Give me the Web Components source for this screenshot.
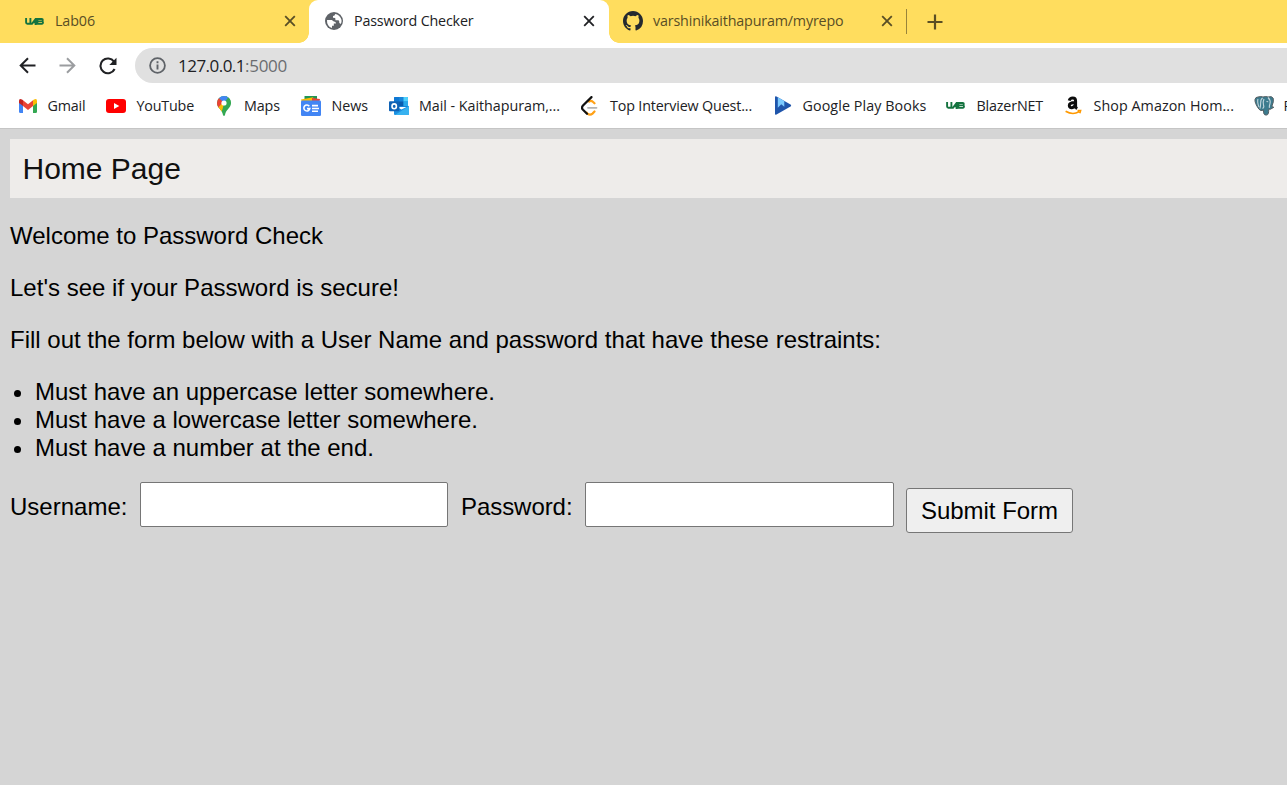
<!DOCTYPE html>
<html lang="en">
<head>
<meta charset="utf-8">
<title>Password Checker</title>
<style>
html,body{margin:0;height:100%;overflow:hidden;background:#d5d5d5}
</style>
</head>
<body>
<browser-window></browser-window>
<script>
const define = (name, html, setup) => customElements.define(name, class extends HTMLElement {
  connectedCallback() {
    if (this.shadowRoot) return;
    const t = document.createElement('template');
    t.innerHTML = html;
    this.attachShadow({mode: 'open'}).appendChild(t.content.cloneNode(true));
    if (setup) setup(this);
  }
});

/* A single line of text whose tracking is adjusted to an advance width. */
define('fit-text', `<style>:host{display:block;white-space:nowrap;flex:none}span{display:inline-block}</style><span><slot></slot></span>`, el => {
  const s = el.shadowRoot.querySelector('span');
  const n = [...el.textContent].length;
  const want = +el.getAttribute('w');
  if (!want) return;
  el.style.width = want + 'px';
  s.style.letterSpacing = (want - s.getBoundingClientRect().width) / n + 'px';
});

const icons = {
  uab: `<svg width="19" height="7" viewBox="0 0 19 7"><path d="M1.1 0v4.6q0 1.2 1.3 1.2H5.4V0M5 5.8h2L10.6 1v6M8 4.4h3M12.4 1h4.4q1 0 1 1.1T16.8 3.4h-4h4.2q1 0 1 1.2T17 5.9h-4.6z" fill="none" stroke="#14733f" stroke-width="1.9"/></svg>`,
  gmail: `<svg width="18" height="14" viewBox="0 0 18 14"><path d="M0 2v10.5Q0 14 1.3 14H4V5z" fill="#4285f4"/><path d="M18 2v10.5q0 1.5-1.3 1.5H14V5z" fill="#34a853"/><path d="M14 1.3V7l4-3V2q0-3-3-1.4z" fill="#fbbc04"/><path d="M4 1.3V7L0 4V2q0-3 3-1.4z" fill="#c5221f"/><path d="M4 1.3l5 4 5-4V7l-5 4-5-4z" fill="#ea4335"/></svg>`,
  youtube: `<svg width="20" height="14" viewBox="0 0 20 14"><rect width="20" height="14" rx="3" fill="#f00"/><path d="M8 4l5.3 3L8 10z" fill="#fff"/></svg>`,
  maps: `<svg width="14" height="20" viewBox="0 0 14 20"><defs><clipPath id="p"><path d="M7 0a7 7 0 0 1 7 7c0 5-5 6-6 12q-1 2-2 0C5 13 0 12 0 7a7 7 0 0 1 7-7"/></clipPath></defs><g clip-path="url(#p)"><path d="M0 0h14v20H0z" fill="#34a853"/><path d="M0 0l7 6-6 7H0z" fill="#ea4335"/><path d="M0 13l7-8 3 4-6 7z" fill="#fbbc04"/><path d="M9 0h5v7L7 16l-2-1z" fill="#34a853"/><path d="M2 2L4-1h9L7 7z" fill="#4285f4"/></g><circle cx="7" cy="7" r="2.6" fill="#fff"/></svg>`,
  news: `<svg width="20" height="20" viewBox="0 0 20 20"><path d="M3.5 0h12.5v6H3.5z" fill="#219653"/><path d="M0 3.6l12-2.3 2 5H1z" fill="#fbbc04"/><path d="M11 2l8 1-1 4h-7z" fill="#ea4335"/><rect y="4.6" width="20" height="15.4" rx="1.3" fill="#4285f4"/><path d="M8.3 10.2A3 3 0 1 0 8.8 12.6H6M11 9.6h6M11 12.5h7M11 15.3h6" fill="none" stroke="#fff" stroke-width="1.6"/></svg>`,
  outlook: `<svg width="20" height="18" viewBox="0 0 20 18"><path d="M5 1q0-1 1-1h12q1 0 1 1v9H5z" fill="#1784d9"/><path d="M5 1q0-1 1-1h4v4H5z" fill="#0f78d4"/><path d="M10 4.5h4.5V9H10z" fill="#0a5cae"/><path d="M14.5 0H18q1 0 1 1v3.5h-4.5z" fill="#4fd0fb"/><path d="M14.5 4.5H19V9h-4.5z" fill="#28a8ea"/><path d="M5 8.5l7.5 4L20 8.7V17q0 1-1 1H6q-1 0-1-1z" fill="#1a8fe0"/><path d="M6 18L20 9v8q0 1-1 1z" fill="#37b2f0"/><rect y="4.3" width="10.4" height="10" rx="1" fill="#0f62b5"/><ellipse cx="5.2" cy="9.3" rx="2.2" ry="2.4" fill="none" stroke="#fff" stroke-width="1.6"/></svg>`,
  leet: `<svg width="17" height="20" viewBox="0 0 17 20" fill="none" stroke-linecap="round" stroke-width="2.2"><path d="M7 11.8h8.5" stroke="#b3b3b3" stroke-width="1.8"/><path d="M13.5 7.3l-1.7-1.6Q10 4 8 5.6M13.5 15.5l-2 2.1q-2.5 2.2-5 0l-1-1" stroke="#ffa116"/><path d="M10.5 1.1L2 9.5q-2 2.2 0 4.3l4 4" stroke="#111"/></svg>`,
  books: `<svg width="18" height="19" viewBox="0 0 18 19"><path d="M1 1.2Q1-.3 2.5.5L16.5 8.5q1.3 1 0 2L2.5 18.5Q1 19.3 1 17.8z" fill="#1f55ab"/><path d="M3.8 1.2l6.5 3.8v5.8L7.2 8.2l-3.4 3.6z" fill="#7bcaff"/></svg>`,
  amazon: `<svg width="17" height="19" viewBox="0 0 17 19"><path d="M4.2 4.6Q5 2.1 7.7 2.1q2.9 0 2.9 2.8v5.4q0 1.5 1.5 2.5M10 6.4c-3.8 0-5.7.8-5.7 3.1 0 3.3 4.9 2.8 6-.7" fill="none" stroke="#0c0c0c" stroke-width="3"/><path d="M.6 15.2q7 4.2 13.4.6M12.6 14.6l3-.1-.8 2.8" fill="none" stroke="#ff9900" stroke-width="1.6"/></svg>`,
  postgres: `<svg width="21" height="20" viewBox="0 0 21 20"><path d="M4 1q3-1 5 0 3-1 5 0 4-1.2 5.2 1.2 1 3-1.4 8.3l2 .8-3.5 2-1.6-.2c0 3 0 6-2.5 6s-2.7-2-2.7-5q-3 1.4-4.6-1Q.5 7 1 3.4 1.5 1 4 1" fill="#3c7b8e" stroke="#555f63" stroke-width="1"/><path d="M8.7 2q-2 1-2 4.5t-.8 6.2M8.5 12.5q2-1 1-3.5T10 3M14 1.5q3 3 2 6t-.6 4.3M12.5 5.5l1.7.3M4 3q-1 3 1 8" fill="none" stroke="#c3d6dd" stroke-width="1.1"/></svg>`,
  globe: `<svg width="18" height="18" viewBox="0 0 18 18"><circle cx="9" cy="9" r="9" fill="#5f6368"/><path d="M2 8l4.8.1 2 1.4q2.2-.1 2.2 2H8.8v2.3H7V16Q1.7 14.4 2 8M10.2 2q-.2 1.8-2.2 2v1.8l2.2.2.3 2.2 3 .1q1 .8.8 2.7l1.5 1.1Q18 7.7 14 3.8 12.3 2 10.2 2" fill="#fff"/></svg>`,
  github: `<svg width="20" height="20" viewBox="0 0 16 16"><path fill="#24292f" d="M8 0C3.58 0 0 3.58 0 8c0 3.54 2.29 6.53 5.47 7.59.4.07.55-.17.55-.38 0-.19-.01-.82-.01-1.49-2.01.37-2.53-.49-2.69-.94-.09-.23-.48-.94-.82-1.13-.28-.15-.68-.52-.01-.53.63-.01 1.08.58 1.23.82.72 1.21 1.87.87 2.33.66.07-.52.28-.87.51-1.07-1.78-.2-3.64-.89-3.64-3.95 0-.87.31-1.59.82-2.15-.08-.2-.36-1.02.08-2.12 0 0 .67-.21 2.2.82a7.6 7.6 0 0 1 4 0c1.53-1.04 2.2-.82 2.2-.82.44 1.1.16 1.92.08 2.12.51.56.82 1.27.82 2.15 0 3.07-1.87 3.75-3.65 3.95.29.25.54.73.54 1.48 0 1.07-.01 1.93-.01 2.2 0 .21.15.46.55.38A8 8 0 0 0 16 8c0-4.42-3.58-8-8-8"/></svg>`,
  close: `<svg width="12" height="12" viewBox="0 0 12 12"><path d="M1.2 1.2l9.6 9.6M10.8 1.2l-9.6 9.6" fill="none" stroke="currentColor" stroke-width="1.8"/></svg>`,
  plus: `<svg width="16" height="16" viewBox="0 0 16 16"><path d="M8 .5v15M.5 8h15" fill="none" stroke="#5a4e24" stroke-width="2.2"/></svg>`,
  back: `<svg width="18" height="17" viewBox="0 0 18 17"><path d="M16.5 8.5H2M9 1.2L1.7 8.5 9 15.8" fill="none" stroke="currentColor" stroke-width="2"/></svg>`,
  forward: `<svg width="18" height="17" viewBox="0 0 18 17"><path d="M.5 8.5H15M8 1.2l7.3 7.3L8 15.8" fill="none" stroke="currentColor" stroke-width="2"/></svg>`,
  reload: `<svg width="18" height="18" viewBox="0 0 18 18"><path d="M15 4.7A7.4 7.4 0 1 0 15.6 12" fill="none" stroke="#202124" stroke-width="2.1"/><path d="M17.5.8V8h-7.2z" fill="#202124"/></svg>`,
  info: `<svg width="17" height="17" viewBox="0 0 17 17"><circle cx="8.5" cy="8.5" r="7.4" fill="none" stroke="#5f6368" stroke-width="1.8"/><path d="M8.5 7.6v5M8.5 4.3v1.9" stroke="#5f6368" stroke-width="1.9"/></svg>`
};
define('ui-icon', `<style>:host{display:block;flex:none}svg{display:block}</style>`, el => {
  el.shadowRoot.innerHTML += icons[el.getAttribute('name')];
});

define('browser-tab', `<style>
:host{display:flex;box-sizing:border-box;flex:none;height:43px;align-items:center;color:#594e25;position:relative;padding-bottom:1px}
:host([active]){background:#fff;color:#202124;border-radius:9px 9px 0 0}
:host([active])::before,:host([active])::after{content:"";position:absolute;bottom:0;width:10px;height:10px}
:host([active])::before{right:100%;background:radial-gradient(circle at 0 0,transparent 9.5px,#fff 10px)}
:host([active])::after{left:100%;background:radial-gradient(circle at 100% 0,transparent 9.5px,#fff 10px)}
ui-icon.x{margin-left:auto}
::slotted(fit-text){padding-bottom:2px}
</style><slot></slot><ui-icon class="x" name="close"></ui-icon>`);

define('tab-strip', `<style>
:host{display:flex;height:43px;background:#ffdd5e;align-items:center;font-size:14.3px}
.one{width:309px;padding-left:25px;padding-right:13px}
.two{width:300px;padding-left:16px;padding-right:14px}
.three{width:297px;padding-left:14px;padding-right:13px}
.div{width:1px;height:25px;background:#98843a;margin-right:20px}
</style>
<browser-tab class="one"><ui-icon name="uab" style="margin-right:11px"></ui-icon><fit-text w="40">Lab06</fit-text></browser-tab>
<browser-tab class="two" active><ui-icon name="globe" style="margin-right:11px"></ui-icon><fit-text w="119.5">Password Checker</fit-text></browser-tab>
<browser-tab class="three"><ui-icon name="github" style="margin-right:10px"></ui-icon><fit-text w="190.5">varshinikaithapuram/myrepo</fit-text></browser-tab>
<div class="div"></div><ui-icon name="plus"></ui-icon>`);

define('address-bar', `<style>
:host{display:flex;height:45px;background:#fff;align-items:center;padding-left:19px;box-sizing:border-box;color:#202124}
.pill{display:flex;align-items:center;flex:1;height:35px;border-radius:18px 0 0 18px;background:#e0e0e0;padding-left:14px;margin-left:18px;font-size:17px}
.port{color:#6b6d70}
</style>
<ui-icon name="back"></ui-icon><ui-icon name="forward" style="color:#9b9da0;margin:0 22px"></ui-icon><ui-icon name="reload"></ui-icon>
<div class="pill"><ui-icon name="info" style="margin-right:12px"></ui-icon><fit-text w="67">127.0.0.1</fit-text><fit-text class="port" w="42">:5000</fit-text></div>`);

const marks = [
  ['gmail','Gmail',87,28.5,38],['youtube','YouTube',110.5,30.5,57.5],['maps','Maps',84.5,27.5,36],['news','News',88,30.5,36.5],
  ['outlook','Mail - Kaithapuram,...',192,30,141],['leet','Top Interview Quest...',193,29,142],['books','Google Play Books',172,28.5,124],
  ['uab','BlazerNET',119,30.5,66.5],['amazon','Shop Amazon Hom...',188.5,28.5,140.5],['postgres','P',60,30,9]];
define('bookmarks-bar', `<style>
:host{display:flex;height:41px;overflow:hidden;background:#fff;align-items:center;padding:0 0 5px 19px;box-sizing:border-box;font-size:14.3px;border-bottom:1px solid #c5c5c5;color:#202124}
.item{display:flex;flex:none;align-items:center}
fit-text{padding-bottom:1px}
</style>` + marks.map(([i,t,w,g,tw]) => `<div class="item" style="width:${w}px"><ui-icon name="${i}" style="width:${g}px"></ui-icon><fit-text w="${tw}">${t}</fit-text></div>`).join(''));

define('page-banner', `<style>
:host{display:flex;height:59px;align-items:center;background:#eeecea;padding-left:12.5px;box-sizing:border-box;font-size:30px;color:#111}
</style><fit-text w="158.5"><slot></slot></fit-text>`);

define('labelled-field', `<style>
:host{display:flex;align-items:center;flex:none}
input{box-sizing:border-box;height:45px;border:1px solid #767676;border-radius:2px;background:#fff;padding:0;margin:0;outline:0}
fit-text{padding-top:4px}
</style><input>`, el => {
  const input = el.shadowRoot.querySelector('input');
  input.style.width = el.getAttribute('field') + 'px';
  input.type = el.getAttribute('type');
  const f = document.createElement('fit-text');
  f.textContent = el.getAttribute('label');
  f.setAttribute('w', el.getAttribute('w'));
  f.style.marginRight = 130 - el.getAttribute('w') - (el.getAttribute('inset') || 0) + 'px';
  input.before(f);
});

define('password-page', `<style>
:host{display:block;padding:10px 0 0 10px;background:#d5d5d5;color:#000;font:24px/28px "Liberation Sans",Arial,sans-serif}
p,ul{margin:24px 0}
ul{padding:0;list-style:none;margin-bottom:20px}
li{display:flex;align-items:center}
li::before{content:"";width:7px;height:7px;border-radius:50%;background:#000;margin:3px 14px 0 4px}
form{display:flex;align-items:flex-start}
button{box-sizing:border-box;display:flex;align-items:center;justify-content:center;width:167px;height:45px;margin:6px 0 0 12px;padding:0;border:1px solid #767676;border-radius:3px;background:#efefef;color:#000;font:inherit}
</style>
<page-banner>Home Page</page-banner>
<p><fit-text w="313">Welcome to Password Check</fit-text></p>
<p><fit-text w="389">Let's see if your Password is secure!</fit-text></p>
<p><fit-text w="871">Fill out the form below with a User Name and password that have these restraints:</fit-text></p>
<ul><li><fit-text w="460">Must have an uppercase letter somewhere.</fit-text></li>
<li><fit-text w="443">Must have a lowercase letter somewhere.</fit-text></li>
<li><fit-text w="339">Must have a number at the end.</fit-text></li></ul>
<form><labelled-field label="Username:" w="117.5" field="308" type="text"></labelled-field>
<labelled-field style="margin-left:13px" label="Password:" w="111.5" inset="6" field="309" type="password"></labelled-field>
<button type="button"><fit-text w="137">Submit Form</fit-text></button></form>`);

define('browser-window', `<style>
:host{display:block;font-family:"Open Sans","Noto Sans",sans-serif}
</style><tab-strip></tab-strip><address-bar></address-bar><bookmarks-bar></bookmarks-bar><password-page></password-page>`);
</script>
</body>
</html>
